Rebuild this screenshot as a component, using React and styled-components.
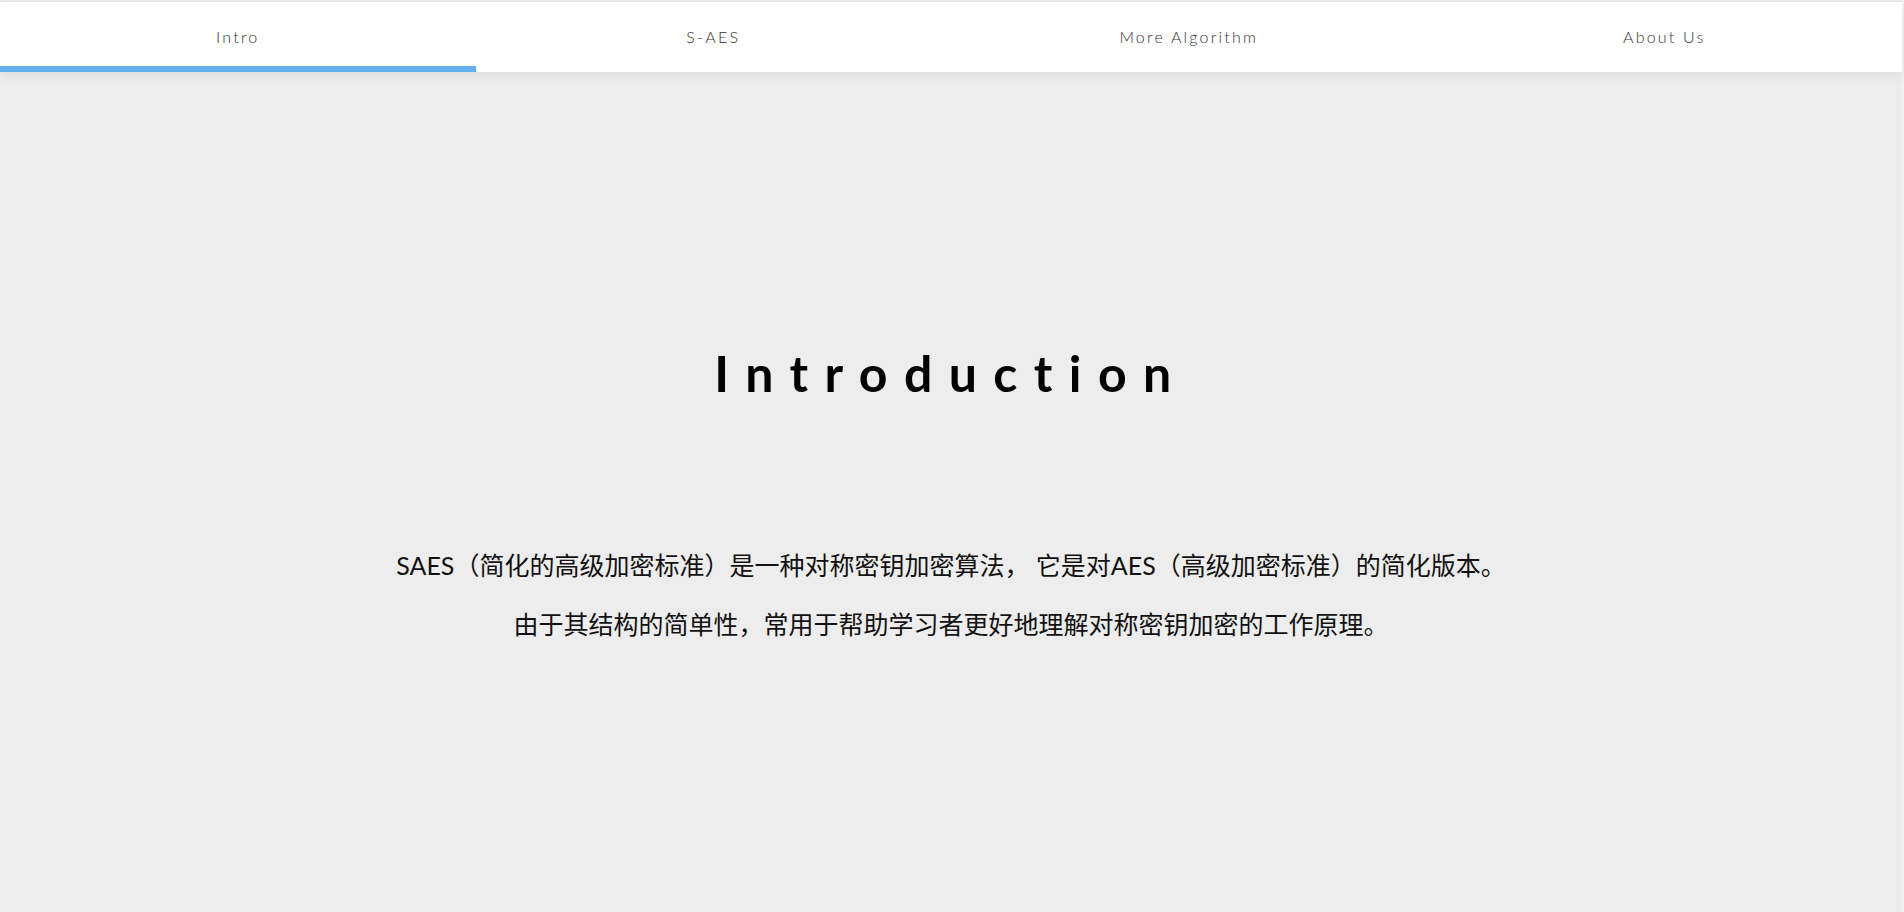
import React, { useState } from "react";
import styled, { createGlobalStyle } from "styled-components";

const tabs = ["Intro", "S-AES", "More Algorithm", "About Us"];

function App() {
  const [active, setActive] = useState(0);

  return (
    <>
      <GlobalStyle />
      <StyledPage>
        <Nav>
          {tabs.map((t, i) => (
            <Tab key={t} $active={i === active} onClick={() => setActive(i)}>
              {t}
            </Tab>
          ))}
        </Nav>
        <Main>
          <Title>Introduction</Title>
          <Text>
            <p>SAES（简化的高级加密标准）是一种对称密钥加密算法， 它是对AES（高级加密标准）的简化版本。</p>
            <p>由于其结构的简单性，常用于帮助学习者更好地理解对称密钥加密的工作原理。</p>
          </Text>
        </Main>
      </StyledPage>
    </>
  );
}

const GlobalStyle = createGlobalStyle`
  html, body {
    margin: 0;
    padding: 0;
    background: #f2f2f2;
  }
  body {
    font-family: "Lato", "Noto Sans CJK SC", sans-serif;
    overflow: hidden;
  }
`;

const StyledPage = styled.div`
  width: calc(100% - 2px);
  min-height: 100vh;
  background: #ededed;
  display: flex;
  flex-direction: column;
`;

const Nav = styled.nav`
  display: grid;
  grid-template-columns: repeat(4, 1fr);
  height: 70px;
  margin-top: 1px;
  border-top: 1px solid #e2e2e2;
  background: #fff;
  box-shadow: 0 3px 12px rgba(0, 0, 0, 0.07);
  position: relative;
  z-index: 1;
`;

const Tab = styled.div`
  display: flex;
  align-items: center;
  justify-content: center;
  padding-top: 4px;
  font-size: 16px;
  font-weight: 300;
  letter-spacing: 2.2px;
  color: #333;
  cursor: pointer;
  border-bottom: 6px solid ${(p) => (p.$active ? "#64b0ef" : "transparent")};
`;

const Main = styled.main`
  flex: 1;
  display: flex;
  flex-direction: column;
  align-items: center;
  padding-top: 271px;
`;

const Title = styled.h1`
  margin: 0;
  font-size: 50px;
  line-height: 60px;
  font-weight: 700;
  letter-spacing: 16.4px;
  color: #000;
`;

const Text = styled.div`
  margin-top: 133px;
  text-align: center;
  font-size: 25px;
  color: #111;

  p {
    margin: 0;
    line-height: 59px;
  }
`;

export default App;
